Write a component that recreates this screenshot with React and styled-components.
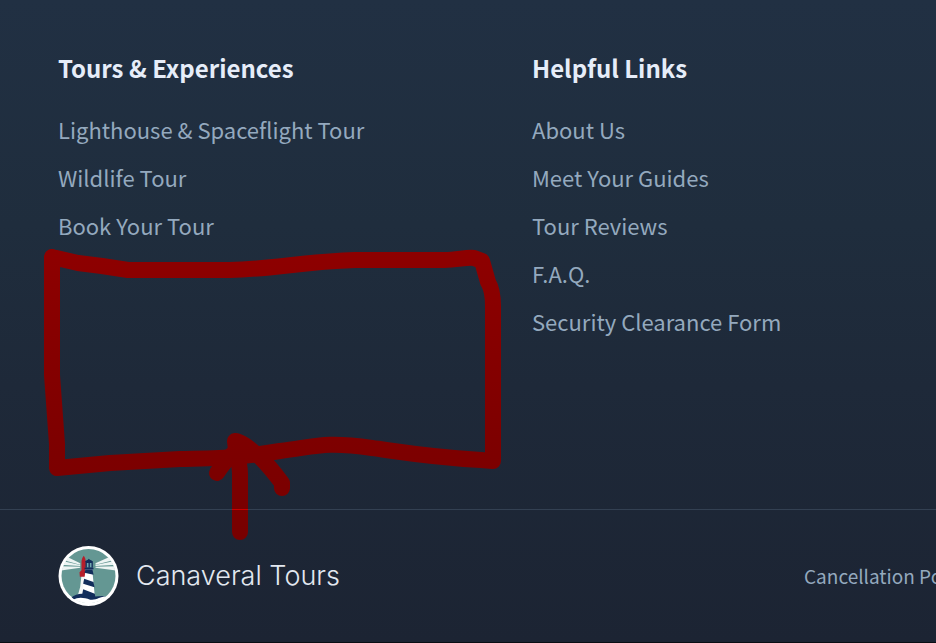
import React from "react";
import styled, { createGlobalStyle } from "styled-components";

const GlobalStyle = createGlobalStyle`
  *, *::before, *::after { box-sizing: border-box; }
  body {
    margin: 0;
    background: #1c2433;
    font-family: "Noto Sans CJK SC", "Noto Sans", sans-serif;
  }
`;

const Footer = styled.footer`
  position: relative;
  overflow: hidden;
  background: linear-gradient(180deg, #213043 0%, #1f2d3d 35%, #1e2939 60%, #1c2433 100%);
  border-bottom: 1px solid #0a0e14;
`;

const Columns = styled.div`
  display: grid;
  grid-template-columns: 1fr 1fr;
  column-gap: 70px;
  padding: 52px 0 164px 58px;
`;

const Heading = styled.h2`
  margin: 0 0 21px;
  font-size: 24px;
  line-height: 32px;
  font-weight: 600;
  color: #e6edf9;
`;

const LinkList = styled.ul`
  margin: 0;
  padding: 0;
  list-style: none;
`;

const LinkItem = styled.li`
  height: 48px;
  line-height: 48px;
`;

const FooterLink = styled.a`
  font-size: ${(p) => (p.$small ? 19 : 22)}px;
  color: #94a9be;
  text-decoration: none;
  white-space: nowrap;

  &:hover { color: #ebf1fc; }
`;

const BottomBar = styled.div`
  display: flex;
  align-items: center;
  justify-content: space-between;
  padding: 36px 0 36px 58px;
  border-top: 1px solid #334052;
`;

const Brand = styled.a`
  display: flex;
  align-items: center;
  gap: 17px;
  color: #e2e8f0;
  text-decoration: none;
`;

const BrandName = styled.span`
  font-family: Inter, sans-serif;
  font-size: 27px;
  line-height: 32px;
  font-weight: 300;
`;

const LogoMark = styled.svg`
  display: block;
  width: 61px;
  height: 60px;
`;

const Legal = styled.nav`
  flex: 0 0 132px;
  overflow: hidden;
  line-height: 32px;
`;

const Markup = styled.svg`
  position: absolute;
  left: 0;
  top: 0;
  width: 936px;
  height: 643px;
  pointer-events: none;
`;

const columns = [
  { title: "Tours & Experiences", links: ["Lighthouse & Spaceflight Tour", "Wildlife Tour", "Book Your Tour"] },
  { title: "Helpful Links", links: ["About Us", "Meet Your Guides", "Tour Reviews", "F.A.Q.", "Security Clearance Form"] },
];

function LighthouseLogo() {
  return (
    <LogoMark viewBox="0 0 182 180" aria-hidden="true">
      <defs>
        <clipPath id="disc"><circle cx="91" cy="90" r="82" /></clipPath>
      </defs>
      <circle cx="91" cy="90" r="90" fill="#fff" />
      <circle cx="91" cy="90" r="81" fill="#649793" />
      <g clipPath="url(#disc)">
        <g fill="#edf4f3">
          <path d="M66 52 20 29 12 41 66 56Z" />
          <path d="M66 57 9 44 5 56 66 60Z" />
          <path d="M66 62 4 61 3 74 66 65Z" />
          <path d="M112 52 162 29 170 41 112 56Z" />
          <path d="M112 57 173 44 177 56 112 60Z" />
          <path d="M112 62 178 61 179 74 112 65Z" />
        </g>
        <path d="M70 87H83L76 150 46 156 60 145 66 123Z" fill="#f4f7f7" />
        <path d="M77 29C83 37 84 48 83 56L82 84 84 92 65 92 64 79 70 73 70 48C70 40 73 34 77 29Z" fill="#b51e2b" />
        <path d="M83 68H102L111 162H69Z" fill="#fff" />
        <path d="M82 70H103L106 86 79 80Z" fill="#112d5b" />
        <path d="M78 98 106 108 109 124 75 113Z" fill="#112d5b" />
        <path d="M75 130 110 143 112 158 71 150Z" fill="#112d5b" />
        <path d="M79 65H106V70H79Z" fill="#112d5b" />
        <path d="M82 48H104V65H82Z" fill="#112d5b" />
        <path d="M80 48C82 42 89 43 92 38 95 43 103 42 105 48Z" fill="#112d5b" />
        <path d="M86 51H91V64H86ZM95 51H100V64H95Z" fill="#72a7ae" />
        <path d="M44 160C64 147 82 152 98 158 116 164 128 142 146 155L132 182H50Z" fill="#fff" />
        <path d="M38 156C58 139 78 142 96 149 112 156 126 147 142 151 126 152 114 164 96 161 76 155 60 152 44 163Z" fill="#112d5b" />
      </g>
    </LogoMark>
  );
}

function HandDrawnCallout() {
  return (
    <Markup viewBox="0 0 936 643" aria-hidden="true">
      <defs>
        <linearGradient id="ink" gradientUnits="userSpaceOnUse" x1="0" y1="250" x2="0" y2="540">
          <stop offset="0" stopColor="#8e0000" />
          <stop offset="0.65" stopColor="#7e0000" />
          <stop offset="1" stopColor="#780000" />
        </linearGradient>
      </defs>
      <g fill="none" stroke="url(#ink)" strokeWidth="16" strokeLinecap="round" strokeLinejoin="round">
        <path d="M52 257 78 263 102 266 128 270H230C275 269 299 262 355 260H444C458 260 466 257 474 258L482 261 488 282C491 287 493 294 493 306V461L481 460C428 457 395 451 372 448C323 441 315 447 280 451C236 458 225 458 180 459L110 463 57 468V444L52 375V257" />
        <path d="M240 532V474C240 462 236 457 235 441C243 442 252 451 260 457C266 463 273 471 282 483V488" />
        <path d="M217 473C223 463 229 457 235 452H246" />
      </g>
      <path d="M232 509.500H248" stroke="#c90000" strokeWidth="1" />
    </Markup>
  );
}

export default function App() {
  return (
    <>
      <GlobalStyle />
      <Footer>
        <Columns>
          {columns.map((column) => (
            <nav key={column.title} aria-label={column.title}>
              <Heading>{column.title}</Heading>
              <LinkList>
                {column.links.map((label) => (
                  <LinkItem key={label}><FooterLink href="#">{label}</FooterLink></LinkItem>
                ))}
              </LinkList>
            </nav>
          ))}
        </Columns>
        <BottomBar>
          <Brand href="#">
            <LighthouseLogo />
            <BrandName>Canaveral Tours</BrandName>
          </Brand>
          <Legal aria-label="Legal">
            <FooterLink $small href="#">Cancellation Policy</FooterLink>
          </Legal>
        </BottomBar>
        <HandDrawnCallout />
      </Footer>
    </>
  );
}
